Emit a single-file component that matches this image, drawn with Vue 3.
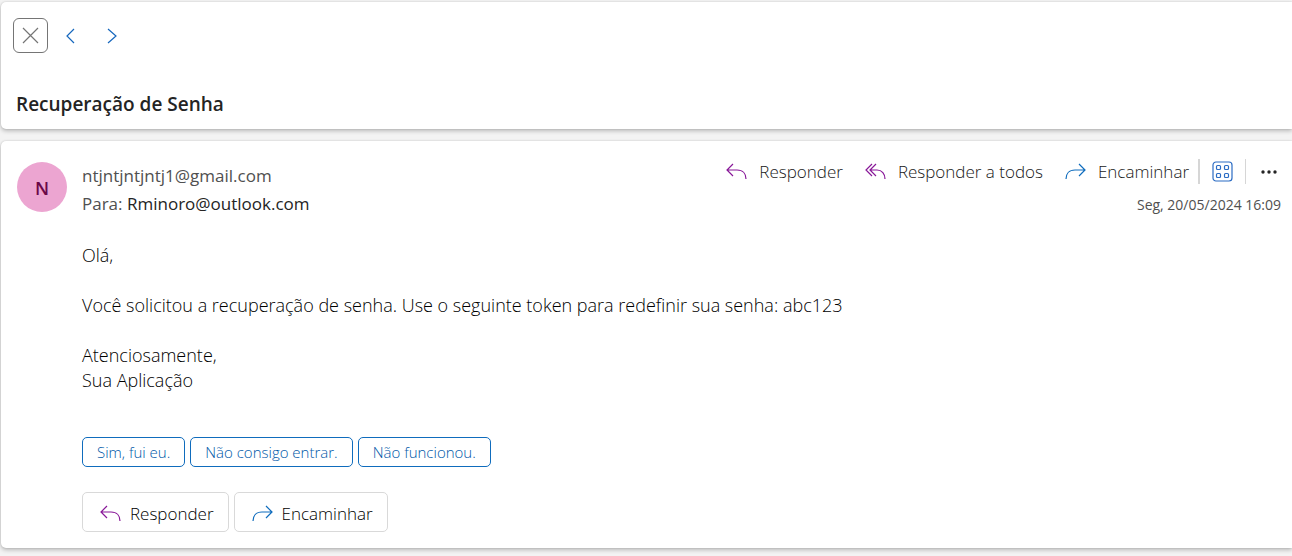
<script setup>
const actions = [
  { label: 'Responder', icon: 'reply' },
  { label: 'Responder a todos', icon: 'replyAll' },
  { label: 'Encaminhar', icon: 'forward' },
]
const bottomActions = [actions[0], actions[2]]
const suggestions = ['Sim, fui eu.', 'Não consigo entrar.', 'Não funcionou.']
const paths = {
  reply: 'M7 1L1 7L7 13M1 7H11C17 7 20 11 20 16',
  replyAll: 'M7 1L1 7L7 13M11 1L5 7L11 13M5 7H12C17 7 20 11 20 16',
  forward: 'M14 1L20 7L14 13M20 7H10C4 7 1 11 1 16',
}
</script>

<template>
  <main class="page">
    <header class="card head">
      <nav class="nav">
        <button class="close" aria-label="Fechar">
          <svg width="17" height="17" viewBox="0 0 17 17"><path d="M1 1L16 16M16 1L1 16" /></svg>
        </button>
        <button class="step" aria-label="Anterior">
          <svg width="10" height="16" viewBox="0 0 10 16"><path d="M8 1L1 8L8 15" /></svg>
        </button>
        <button class="step" aria-label="Próximo">
          <svg width="10" height="16" viewBox="0 0 10 16"><path d="M1 1L9 8L1 15" /></svg>
        </button>
      </nav>
      <h1 class="subject">Recuperação de Senha</h1>
    </header>

    <article class="card message">
      <div class="avatar">N</div>
      <div class="content">
        <div class="top">
          <div class="people">
            <div class="from">ntjntjntjntj1@gmail.com</div>
            <div class="to">Para: <span class="recipient">Rminoro@outlook.com</span></div>
          </div>
          <div class="side">
            <div class="toolbar">
              <button v-for="a in actions" :key="a.label" class="action">
                <svg :class="a.icon" width="21" height="17" viewBox="0 0 21 17"><path :d="paths[a.icon]" /></svg>
                <span>{{ a.label }}</span>
              </button>
              <span class="divider first"></span>
              <button class="tool" aria-label="Aplicativos">
                <svg class="apps" width="21" height="21" viewBox="0 0 21 21">
                  <rect x="1" y="1" width="19" height="19" rx="3" />
                  <rect x="4.5" y="4.5" width="4" height="4" rx="1" />
                  <rect x="12.5" y="4.5" width="4" height="4" rx="1" />
                  <rect x="4.5" y="12.5" width="4" height="4" rx="1" />
                  <rect x="12.5" y="12.5" width="4" height="4" rx="1" />
                </svg>
              </button>
              <span class="divider"></span>
              <button class="tool more" aria-label="Mais ações">
                <svg class="dots" width="18" height="4" viewBox="0 0 18 4">
                  <circle cx="3" cy="2" r="1.7" /><circle cx="9" cy="2" r="1.7" /><circle cx="15" cy="2" r="1.7" />
                </svg>
              </button>
            </div>
            <time class="date" datetime="2024-05-20T16:09">Seg, 20/05/2024 16:09</time>
          </div>
        </div>

        <div class="body">
          <p>Olá,</p>
          <p>Você solicitou a recuperação de senha. Use o seguinte token para redefinir sua senha: abc123</p>
          <p>Atenciosamente,<br />Sua Aplicação</p>
        </div>

        <div class="suggestions">
          <button v-for="s in suggestions" :key="s" class="suggestion">{{ s }}</button>
        </div>
        <div class="replies">
          <button v-for="a in bottomActions" :key="a.label" class="reply-button">
            <svg :class="a.icon" width="21" height="17" viewBox="0 0 21 17"><path :d="paths[a.icon]" /></svg>
            <span>{{ a.label }}</span>
          </button>
        </div>
      </div>
    </article>
  </main>
</template>

<style>
body {
  background: #f3f3f3;
}
</style>

<style scoped>
.page {
  padding: 2px 0 8px 1px;
  display: flex;
  flex-direction: column;
  gap: 12px;
  font-family: "Open Sans", "Noto Sans", sans-serif;
  font-size: 17px;
  font-weight: 300;
  line-height: 25px;
  color: #000;
  overflow: hidden;
}
.card {
  background: #fff;
  border-radius: 5px 0 0 5px;
  box-shadow: 0 0 2px rgba(0, 0, 0, 0.14), 0 2px 4px rgba(0, 0, 0, 0.24);
}
button {
  font: inherit;
  background: none;
  border: 0;
  padding: 0;
  display: flex;
  align-items: center;
  justify-content: center;
  white-space: nowrap;
}
svg {
  fill: none;
  stroke-width: 1.2;
  flex: none;
}
.head {
  padding: 16px 15px 12px 12px;
}
.nav {
  display: flex;
  align-items: center;
  gap: 4px;
}
.close {
  width: 35px;
  height: 35px;
  border: 1px solid #757575;
  border-radius: 6px;
  stroke: #757575;
}
.step {
  width: 37px;
  height: 35px;
  stroke: #1567bd;
}
.subject {
  margin: 38px 0 0 3px;
  font-size: 19px;
  line-height: 26px;
  font-weight: 600;
  color: #242424;
}
.message {
  display: flex;
  gap: 15px;
  padding: 15px 11px 16px 16px;
}
.avatar {
  width: 50px;
  height: 50px;
  margin-top: 6px;
  flex: none;
  border-radius: 50%;
  background: #eca5d1;
  color: #6b0848;
  font-size: 18px;
  font-weight: 600;
  line-height: 52px;
  text-align: center;
}
.content {
  flex: 1;
  min-width: 0;
}
.top {
  display: flex;
  justify-content: space-between;
}
.people {
  padding-top: 6px;
  line-height: 28px;
  font-weight: 400;
  color: #505050;
}
.recipient {
  color: #242424;
}
.side {
  display: flex;
  flex-direction: column;
  align-items: flex-end;
}
.toolbar {
  display: flex;
  align-items: center;
  height: 31px;
  color: #181818;
}
.action {
  color: inherit;
  gap: 12px;
  margin-left: 22px;
}
.reply,
.replyAll {
  stroke: #881798;
}
.forward {
  stroke: #0f6cbd;
}
.divider {
  width: 1px;
  height: 25px;
  background: #d6d6d6;
}
.first {
  width: 2px;
  margin-left: 9px;
}
.tool {
  width: 45px;
  height: 31px;
}
.more {
  width: 35px;
  justify-content: flex-end;
  padding-right: 3px;
}
.apps {
  stroke: #2b6cc4;
}
.dots {
  fill: #242424;
}
.date {
  margin-top: 6px;
  font-size: 14px;
  font-weight: 400;
  line-height: 24px;
  color: #505050;
}
.body {
  margin-top: 25px;
  font-size: 18px;
}
.body p {
  margin: 0 0 25px;
}
.suggestions,
.replies {
  display: flex;
  gap: 5px;
}
.suggestions {
  margin-top: 44px;
}
.suggestion {
  height: 30px;
  padding: 0 14px;
  border: 1px solid #0f6cbd;
  border-radius: 5px;
  color: #0058a8;
  font-size: 15px;
}
.replies {
  margin-top: 25px;
}
.reply-button {
  height: 40px;
  padding: 2px 14px 0 17px;
  gap: 9px;
  border: 1px solid #d9d9d9;
  border-radius: 5px;
  color: #000;
}
</style>
